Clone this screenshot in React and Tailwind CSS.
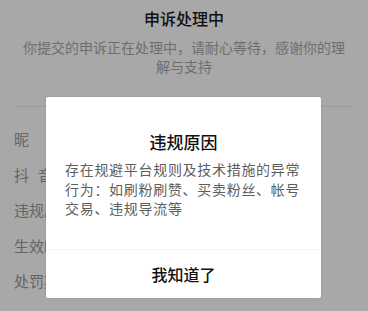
export default function App() {
  const rows = [
    { label: <><span>昵</span><span className="ml-[20px]">称</span></>, value: '' },
    { label: <><span>抖</span><span className="ml-[9px]">音</span><span className="ml-[9px]">号</span></>, value: '' },
    { label: '违规原因', value: '' },
    { label: '生效时间', value: '' },
    { label: '处罚期限', value: '' },
  ]

  return (
    <div className="relative w-[368px] h-[311px] overflow-hidden bg-white font-['Noto_Sans_CJK_SC',sans-serif]">
      {/* page underneath */}
      <div className="pt-[6px]">
        <h1 className="text-center text-[16px] leading-[24px] font-medium text-[#1a1a1a]">申诉处理中</h1>
        <p className="mt-[8px] px-[20px] text-center text-[14px] leading-[19px] text-[#a8a8a8]">
          你提交的申诉正在处理中，请耐心等待，感谢你的理解与支持
        </p>
        <div className="mx-[16px] mt-[30px] h-px bg-[#ececec]" />
        <div className="px-[14px] pt-[21px]">
          {rows.map((r, i) => (
            <div key={i} className="flex h-[35.5px] items-start text-[15px] leading-[22px] text-[#999]">
              {r.label}：{r.value}
            </div>
          ))}
        </div>
      </div>

      {/* mask */}
      <div className="absolute inset-0 bg-black/[0.34]" />

      {/* dialog */}
      <div className="absolute left-[46px] top-[97px] w-[275px] rounded-[2px] bg-white shadow-[0_0_2px_rgba(0,0,0,0.15)]">
        <div className="px-[19px] pt-[33px] pb-[30px]">
          <h2 className="text-center text-[17px] leading-[24px] font-medium text-[#111]">违规原因</h2>
          <p className="mt-[6px] text-[14px] leading-[19.5px] tracking-[0.7px] text-[#5e5e5e]">
            存在规避平台规则及技术措施的异常行为：如刷粉刷赞、买卖粉丝、帐号交易、违规导流等
          </p>
        </div>
        <div className="h-px bg-[#f3f3f3]" />
        <button className="flex h-[48px] w-full items-center justify-center text-[16px] font-medium text-[#111]">
          我知道了
        </button>
      </div>
    </div>
  )
}
